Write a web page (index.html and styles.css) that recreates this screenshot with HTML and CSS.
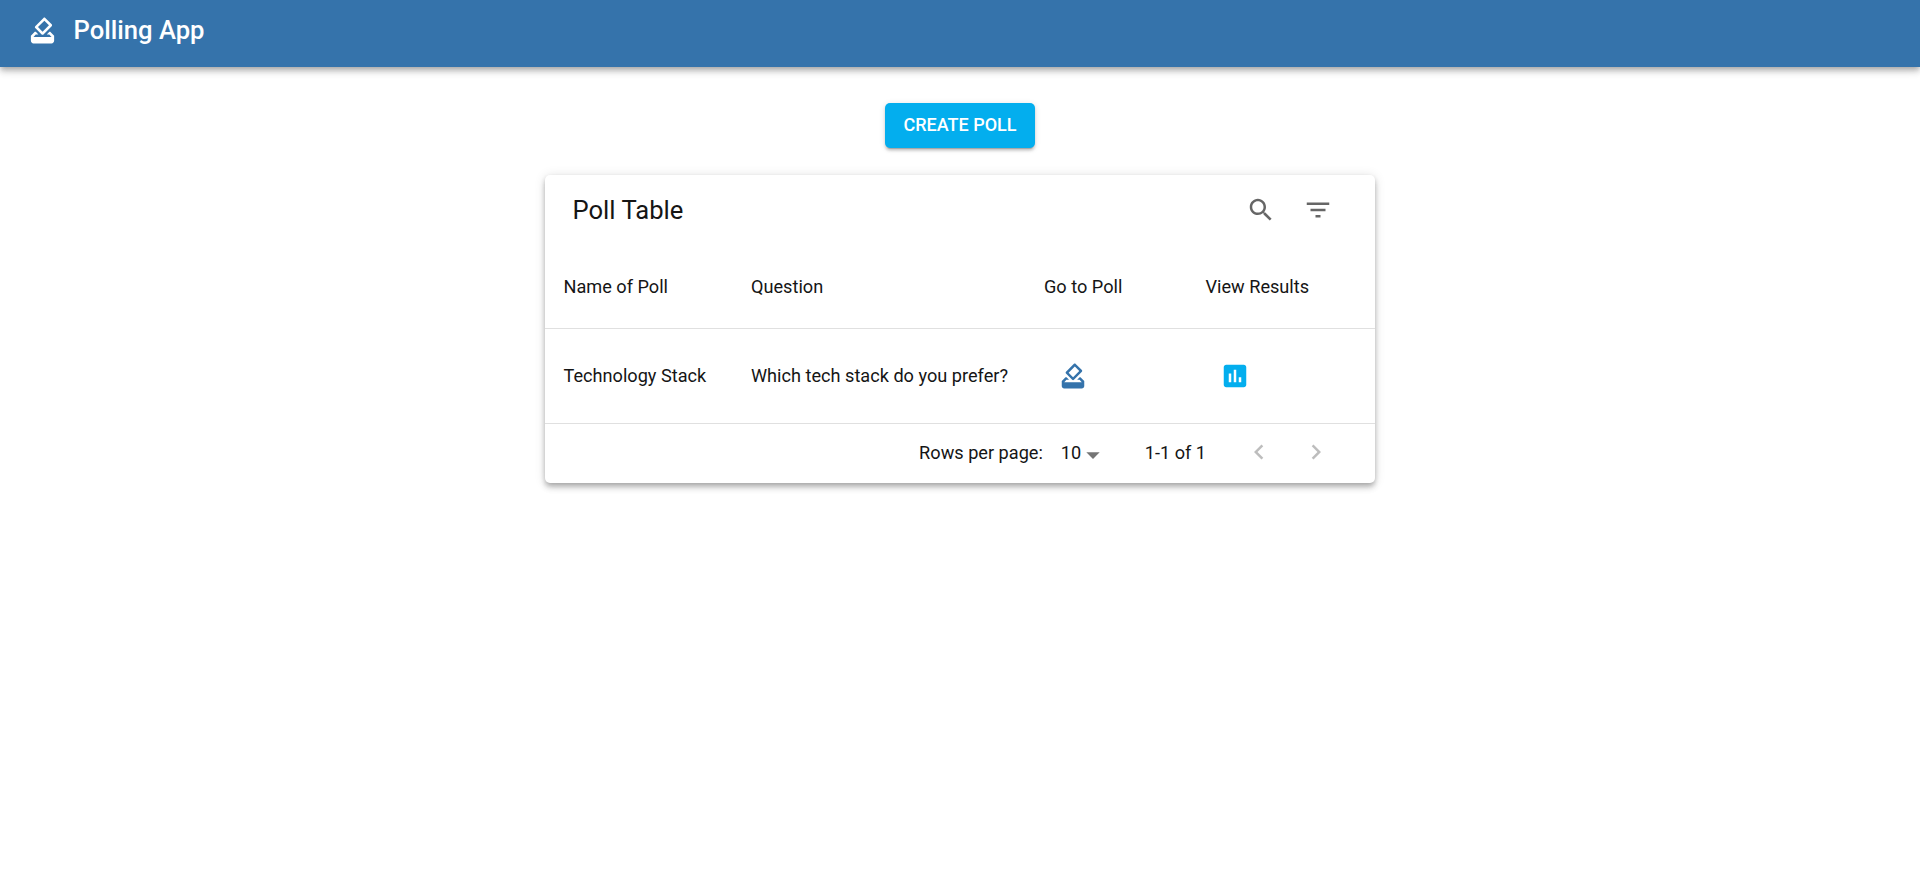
FILE: index.html
```html
<!DOCTYPE html>
<html lang="en">
<head>
<meta charset="utf-8">
<title>Polling App</title>
<link rel="stylesheet" href="styles.css">
</head>
<body>
<header class="appbar">
  <svg class="brand-icon" viewBox="0 0 24 24"><path d="M18 13h-.68l-2 2h1.91L19 17H5l1.78-2h2.05l-2-2H6l-3 3v4c0 1.1.89 2 1.99 2H19c1.1 0 2-.89 2-2v-4l-3-3zm-1-5.05l-4.95 4.95-3.54-3.54 4.95-4.95L17 7.95zm-4.24-5.66L6.39 8.66c-.39.39-.39 1.02 0 1.41l4.95 4.95c.39.39 1.02.39 1.41 0l6.36-6.36c.39-.39.39-1.02 0-1.41L14.16 2.3c-.38-.4-1.01-.4-1.4-.01z"/></svg>
  <h1 class="brand-title">Polling App</h1>
</header>
<main class="content">
  <button class="create-btn" type="button">CREATE POLL</button>
  <section class="card">
    <div class="toolbar">
      <h2 class="card-title">Poll Table</h2>
      <div class="tools">
        <svg class="tool-icon" viewBox="0 0 24 24"><path d="M15.5 14h-.79l-.28-.27C15.41 12.59 16 11.11 16 9.5 16 5.91 13.09 3 9.5 3S3 5.91 3 9.5 5.91 16 9.5 16c1.61 0 3.09-.59 4.23-1.57l.27.28v.79l5 4.99L20.49 19l-4.99-5zm-6 0C7.01 14 5 11.99 5 9.5S7.01 5 9.5 5 14 7.01 14 9.5 11.99 14 9.5 14z"/></svg>
        <svg class="tool-icon" viewBox="0 0 24 24"><path d="M10 18h4v-2h-4v2zM3 6v2h18V6H3zm3 7h12v-2H6v2z"/></svg>
      </div>
    </div>
    <div class="row head-row">
      <span>Name of Poll</span>
      <span>Question</span>
      <span>Go to Poll</span>
      <span>View Results</span>
    </div>
    <div class="row body-row">
      <span class="cell-text">Technology Stack</span>
      <span class="cell-text">Which tech stack do you prefer?</span>
      <span><svg class="cell-icon vote" viewBox="0 0 24 24"><path d="M18 13h-.68l-2 2h1.91L19 17H5l1.78-2h2.05l-2-2H6l-3 3v4c0 1.1.89 2 1.99 2H19c1.1 0 2-.89 2-2v-4l-3-3zm-1-5.05l-4.95 4.95-3.54-3.54 4.95-4.95L17 7.95zm-4.24-5.66L6.39 8.66c-.39.39-.39 1.02 0 1.41l4.95 4.95c.39.39 1.02.39 1.41 0l6.36-6.36c.39-.39.39-1.02 0-1.41L14.16 2.3c-.38-.4-1.01-.4-1.4-.01z"/></svg></span>
      <span><svg class="cell-icon chart" viewBox="0 0 24 24"><path d="M19 3H5c-1.1 0-2 .9-2 2v14c0 1.1.9 2 2 2h14c1.1 0 2-.9 2-2V5c0-1.1-.9-2-2-2zM9 17H7v-7h2v7zm4 0h-2V7h2v10zm4 0h-2v-4h2v4z"/></svg></span>
    </div>
    <div class="pager">
      <span class="pager-label">Rows per page:</span>
      <span class="pager-select">10<svg class="drop" viewBox="0 0 24 24"><path d="M7 10l5 5 5-5z"/></svg></span>
      <span class="pager-count">1-1 of 1</span>
      <svg class="nav-icon prev" viewBox="0 0 24 24"><path d="M15.41 7.41L14 6l-6 6 6 6 1.41-1.41L10.83 12z"/></svg>
      <svg class="nav-icon next" viewBox="0 0 24 24"><path d="M10 6L8.59 7.41 13.17 12l-4.58 4.59L10 18l6-6z"/></svg>
    </div>
  </section>
</main>
</body>
</html>
```
FILE: styles.css
```css
* { box-sizing: border-box; }
html, body { margin: 0; height: 100%; }
body { font-family: Roboto, "Liberation Sans", sans-serif; background: #fff; color: #151515; }
svg { display: block; fill: currentColor; }
.appbar {
  height: 67px; padding: 0 27px 6px; display: flex; align-items: center; gap: 15.5px;
  background: #3573ab; color: #fff;
  box-shadow: 0 2.5px 5px -1px rgba(0,0,0,.2), 0 5px 6px 0 rgba(0,0,0,.14), 0 1px 12px 0 rgba(0,0,0,.12);
}
.brand-icon { width: 31px; height: 31px; }
.brand-title { margin: 0; font-size: 25.6px; font-weight: 500; line-height: 1.6; }
.content { display: flex; flex-direction: column; align-items: center; padding-top: 36px; }
.create-btn {
  width: 150px; height: 45px; border: 0; border-radius: 5px; padding: 0 0 2px;
  background: #03aeee; color: #fff; font: 500 18px/1 Roboto, sans-serif;
  box-shadow: 0 3px 1px -2px rgba(0,0,0,.2), 0 2.5px 2.5px 0 rgba(0,0,0,.14), 0 1px 6px 0 rgba(0,0,0,.12);
}
.card {
  width: 830px; margin-top: 27px; background: #fff; border-radius: 5px;
  box-shadow: 0 2.5px 5px -1px rgba(0,0,0,.2), 0 5px 6px 0 rgba(0,0,0,.14), 0 1px 12px 0 rgba(0,0,0,.12);
}
.toolbar { height: 69px; display: flex; align-items: center; justify-content: space-between; padding: 0 42px 0 27.5px; }
.card-title { margin: 2px 0 0; font-size: 25.6px; font-weight: 400; line-height: 1.6; }
.tools { display: flex; gap: 27px; color: rgba(0,0,0,.6); }
.tool-icon { width: 30px; height: 30px; }
.row { display: grid; grid-template-columns: 187.5px 293px 161.5px 1fr; align-items: center; padding-left: 18.5px; font-size: 18.15px; border-bottom: 1px solid #e0e0e0; }
.head-row { height: 85px; }
.body-row { height: 95px; }
.cell-text { padding-bottom: 2px; }
.cell-icon { width: 30px; height: 30px; }
.vote { color: #3573ab; margin-left: 14px; }
.chart { color: #03aeee; margin-left: 14px; }
.pager { height: 59px; display: flex; align-items: center; justify-content: flex-end; padding: 0 44px 3px 0; font-size: 18.15px; }
.pager-select { display: flex; align-items: center; margin-left: 18px; }
.drop { width: 32px; height: 32px; color: rgba(0,0,0,.54); margin: 6px -1px 0 -4.5px; }
.pager-count { margin-left: 37px; }
.nav-icon { width: 30px; height: 30px; color: rgba(0,0,0,.26); }
.prev { margin-left: 38px; }
.next { margin-left: 27px; }
```
